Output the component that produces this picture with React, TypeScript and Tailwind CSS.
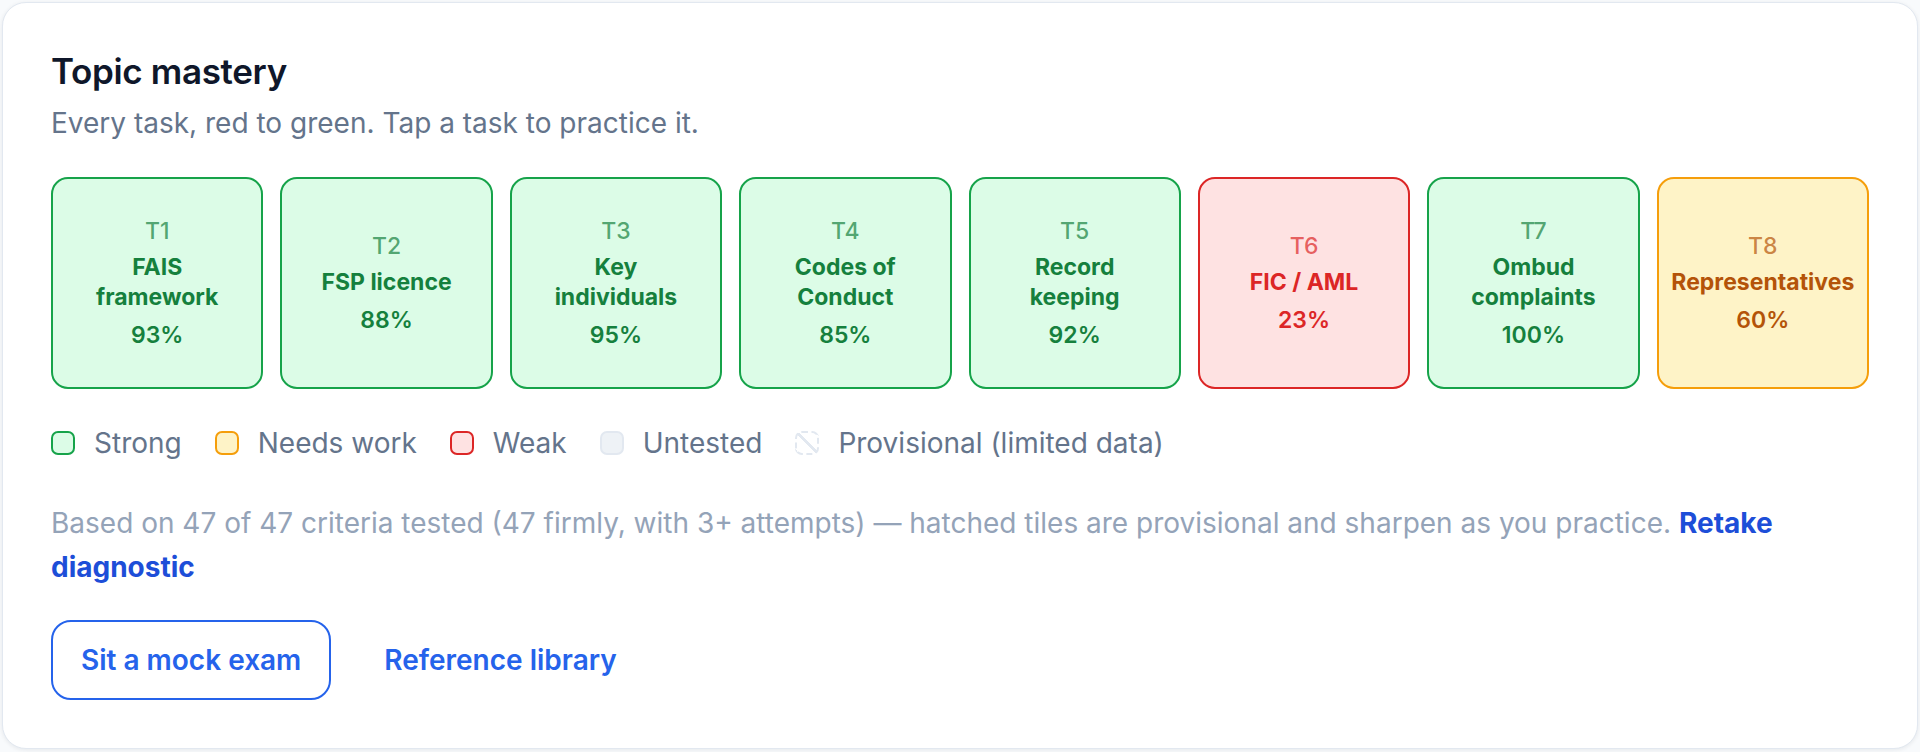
type MasteryTone = 'strong' | 'needs' | 'weak';

const toneStyles: Record<MasteryTone, { tile: string; code: string; text: string }> = {
  strong: {
    tile: 'border-[#16a34a] bg-[#dcfce7]',
    code: 'text-[#15803d]/70',
    text: 'text-[#15803d]',
  },
  needs: {
    tile: 'border-[#f59e0b] bg-[#fef3c7]',
    code: 'text-[#b45309]/70',
    text: 'text-[#b45309]',
  },
  weak: {
    tile: 'border-[#dc2626] bg-[#fee2e2]',
    code: 'text-[#dc2626]/70',
    text: 'text-[#dc2626]',
  },
};

const topics: Array<{ code: string; name: string; score: number; tone: MasteryTone }> = [
  { code: 'T1', name: 'FAIS framework', score: 93, tone: 'strong' },
  { code: 'T2', name: 'FSP licence', score: 88, tone: 'strong' },
  { code: 'T3', name: 'Key individuals', score: 95, tone: 'strong' },
  { code: 'T4', name: 'Codes of Conduct', score: 85, tone: 'strong' },
  { code: 'T5', name: 'Record keeping', score: 92, tone: 'strong' },
  { code: 'T6', name: 'FIC / AML', score: 23, tone: 'weak' },
  { code: 'T7', name: 'Ombud complaints', score: 100, tone: 'strong' },
  { code: 'T8', name: 'Representatives', score: 60, tone: 'needs' },
];

const legend = [
  { label: 'Strong', swatch: 'border-2 border-[#16a34a] bg-[#dcfce7]' },
  { label: 'Needs work', swatch: 'border-2 border-[#f59e0b] bg-[#fef3c7]' },
  { label: 'Weak', swatch: 'border-2 border-[#dc2626] bg-[#fee2e2]' },
  { label: 'Untested', swatch: 'border-2 border-[#e2e8f0] bg-[#eef2f6]' },
  {
    label: 'Provisional (limited data)',
    swatch:
      'border-2 border-dashed border-[#e2e8f0] bg-[linear-gradient(45deg,transparent_46%,#e2e8f0_46%,#e2e8f0_56%,transparent_56%)]',
  },
];

function TopicTile({ code, name, score, tone }: { code: string; name: string; score: number; tone: MasteryTone }) {
  const styles = toneStyles[tone];
  return (
    <button
      type="button"
      className={`flex h-[212px] min-w-0 flex-col items-center justify-center rounded-[17px] border-2 px-[26px] text-center text-[23px] ${styles.tile}`}
    >
      <span className={`leading-[30px] font-medium ${styles.code}`}>{code}</span>
      <span className={`mt-[6px] leading-[30px] font-bold ${styles.text}`}>{name}</span>
      <span className={`mt-2 leading-[30px] font-semibold ${styles.text}`}>{score}%</span>
    </button>
  );
}

export default function App() {
  return (
    <div className="min-h-screen bg-[#f8fafc] p-[2px] font-['Inter','Noto_Sans',sans-serif]">
      <section className="rounded-[24px] border border-[#e2e8f0] bg-white p-12 shadow-[0_1px_4px_rgba(15,23,42,0.08)]">
        <h2 className="text-[35px] leading-[40px] font-semibold tracking-[-0.01em] text-[#0f172a]">Topic mastery</h2>
        <p className="mt-[14px] text-[28px] leading-[36px] text-[#64748b]">
          Every task, red to green. Tap a task to practice it.
        </p>

        <div className="mt-9 grid grid-cols-8 gap-[17px]">
          {topics.map((topic) => (
            <TopicTile key={topic.code} {...topic} />
          ))}
        </div>

        <ul className="mt-9 flex items-center gap-x-[33px] text-[28px] leading-[36px] text-[#64748b]">
          {legend.map((item) => (
            <li key={item.label} className="flex items-center gap-[19px]">
              <span className={`h-6 w-6 shrink-0 rounded-[7px] ${item.swatch}`} />
              <span>{item.label}</span>
            </li>
          ))}
        </ul>

        <p className="mt-10 text-[28px] leading-[44px] text-[#94a3b8]">
          Based on 47 of 47 criteria tested (47 firmly, with 3+ attempts) — hatched tiles are provisional and sharpen as
          you practice.{' '}
          <a href="#" className="font-bold text-[#1d4ed8]">
            Retake diagnostic
          </a>
        </p>

        <div className="mt-[31px] flex items-center gap-[25px]">
          <button
            type="button"
            className="flex h-20 items-center rounded-[20px] border-2 border-[#2563eb] bg-white px-7 text-[28px] font-semibold text-[#2563eb]"
          >
            Sit a mock exam
          </button>
          <a href="#" className="px-7 text-[28px] font-semibold text-[#2563eb]">
            Reference library
          </a>
        </div>
      </section>
    </div>
  );
}
